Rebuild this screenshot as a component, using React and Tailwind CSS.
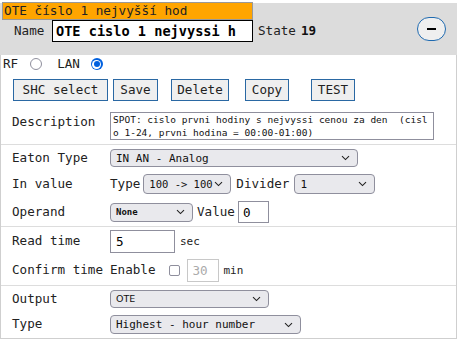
import React from 'react'

const mono = "font-['DejaVu_Sans_Mono',monospace]"

const Chevron = () => (
  <svg width="9" height="6" viewBox="0 0 9 6" className="absolute right-[7px] top-1/2 -translate-y-1/2">
    <path d="M1 1.2 L4.5 4.6 L8 1.2" fill="none" stroke="#222" strokeWidth="1.1" />
  </svg>
)

const Select = ({ w, h = 18, text, textClass = 'text-[11px]' }) => (
  <div
    className={`relative flex items-center bg-[#e9e9ed] border border-[#8f8f9d] rounded-[4px] pl-[5px] text-[#111] ${textClass}`}
    style={{ width: w, height: h }}
  >
    <span className="whitespace-pre">{text}</span>
    <Chevron />
  </div>
)

const Btn = ({ children, w, ml }) => (
  <button
    className="h-[22px] border border-[#2a68a3] bg-[#efefef] text-[12.6px] text-[#222] flex items-center justify-center"
    style={{ width: w, marginLeft: ml }}
  >
    {children}
  </button>
)

const Label = ({ children }) => (
  <div className="w-[109px] pl-[11px] shrink-0 whitespace-nowrap text-[#222]">{children}</div>
)

export default function App() {
  return (
    <div className={`w-[459px] h-[345px] bg-white ${mono} text-[12.6px] leading-none`}>
      <div className="pt-[3px] w-[457px]">
        {/* header */}
        <div className="h-[52px] bg-[#dcdcdc] flex items-start justify-between">
          <div className="-mt-[1px]">
            <div className="ml-[2px] w-[251px] h-[18px] bg-[#ffa500] border border-[#999] flex items-center pl-[1px] text-[12.7px] text-[#222] overflow-hidden whitespace-nowrap">
              OTE číslo 1 nejvyšší hod
            </div>
            <div className="flex items-center h-[22px]">
              <div className="w-[52px] pl-[14px] text-[#222]">Name</div>
              <input
                readOnly
                value="OTE cislo 1 nejvyssi hodina"
                className={`w-[201px] h-[22px] border border-black bg-white pl-[3px] pr-[16px] font-bold text-[13.6px] text-black outline-none ${mono}`}
              />
              <span className="ml-[5px] text-[#222]">State</span>
              <span className="ml-[5px] font-bold text-[#111]">19</span>
            </div>
          </div>
          <button className="mt-[14px] mr-[11px] w-[29px] h-[24px] rounded-full border-[1.5px] border-[#1f6ab0] bg-[#efefef] flex items-center justify-center">
            <span className="block w-[9px] h-[1.5px] bg-black" />
          </button>
        </div>

        {/* body */}
        <div className="border-x border-b border-[#cfcfcf]">
          <div className="pt-[1px] pb-[4px]">
            <div className="h-[16px] flex items-center pl-[2px] text-[#222]">
              <span>RF</span>
              <span className="ml-[12px] w-[12px] h-[12px] rounded-full border border-[#8f8f9d] bg-white" />
              <span className="ml-[15px]">LAN</span>
              <span className="ml-[11px] w-[12px] h-[12px] rounded-full bg-[#0060df] flex items-center justify-center">
                <span className="w-[9px] h-[9px] rounded-full bg-white flex items-center justify-center">
                  <span className="w-[6px] h-[6px] rounded-full bg-[#0060df]" />
                </span>
              </span>
            </div>
            <div className="mt-[7px] flex items-center">
              <Btn w={95} ml={12}>SHC select</Btn>
              <Btn w={45} ml={5}>Save</Btn>
              <Btn w={58} ml={13}>Delete</Btn>
              <Btn w={44} ml={16}>Copy</Btn>
              <Btn w={44} ml={22}>TEST</Btn>
            </div>
            <div className="mt-[11px] flex items-start">
              <div className="w-[109px] pl-[11px] pt-[4px] shrink-0 text-[#222]">Description</div>
              <textarea
                readOnly
                value="SPOT: cislo prvni hodiny s nejvyssi cenou za den  (cislo 1-24, prvni hodina = 00:00-01:00)"
                className={`w-[324px] h-[28px] border border-[#8f8f9d] px-[2px] py-[1px] text-[9.5px] leading-[12.5px] text-[#111] resize-none overflow-hidden break-all outline-none ${mono}`}
              />
            </div>
          </div>

          <div className="border-t border-[#dddddd] pt-[4px] pb-[3px]">
            <div className="flex items-center h-[18px]">
              <Label>Eaton Type</Label>
              <Select w={248} text="IN AN - Analog" />
            </div>
            <div className="mt-[7px] flex items-center h-[20px]">
              <Label>In value</Label>
              <span className="text-[#222]">Type</span>
              <div className="ml-[3px]">
                <Select w={88} h={20} text="100 -> 100" textClass="text-[10.5px]" />
              </div>
              <span className="ml-[5px] text-[#222]">Divider</span>
              <div className="ml-[5px]">
                <Select w={81} h={20} text="1" textClass="text-[11px]" />
              </div>
            </div>
            <div className="mt-[7px] flex items-center h-[22px]">
              <Label>Operand</Label>
              <Select w={83} h={19} text="None" textClass="text-[9px] font-bold" />
              <span className="ml-[4px] text-[#222]">Value</span>
              <input
                readOnly
                value="0"
                className={`ml-[3px] w-[31px] h-[22px] border border-[#8f8f9d] pl-[4px] text-[12.6px] text-black outline-none ${mono}`}
              />
            </div>
          </div>

          <div className="border-t border-[#dddddd] pt-[3px] pb-[3px]">
            <div className="flex items-center h-[23px]">
              <Label>Read time</Label>
              <input
                readOnly
                value="5"
                className={`w-[65px] h-[23px] border border-[#8f8f9d] pl-[5px] text-[12.6px] text-black outline-none ${mono}`}
              />
              <span className="ml-[5px] text-[11px] text-[#222]">sec</span>
            </div>
            <div className="mt-[6px] flex items-center h-[23px]">
              <Label>Confirm time</Label>
              <span className="text-[#222]">Enable</span>
              <span className="ml-[13px] w-[11px] h-[11px] rounded-[2px] border border-[#8f8f9d] bg-white" />
              <input
                readOnly
                disabled
                value="30"
                className={`ml-[7px] w-[32px] h-[23px] border border-[#c8c8c8] bg-white pl-[5px] text-[12.6px] text-[#aaa] outline-none ${mono}`}
              />
              <span className="ml-[5px] text-[11px] text-[#222]">min</span>
            </div>
          </div>

          <div className="border-t border-[#dddddd] pt-[4px] pb-[4px]">
            <div className="flex items-center h-[18px]">
              <Label>Output</Label>
              <Select w={159} text="OTE" textClass="text-[9.5px] font-['DejaVu_Sans',sans-serif]" />
            </div>
            <div className="mt-[7px] flex items-center h-[19px]">
              <Label>Type</Label>
              <Select w={191} h={19} text="Highest - hour number" textClass="text-[11px]" />
            </div>
          </div>
        </div>
      </div>
    </div>
  )
}
